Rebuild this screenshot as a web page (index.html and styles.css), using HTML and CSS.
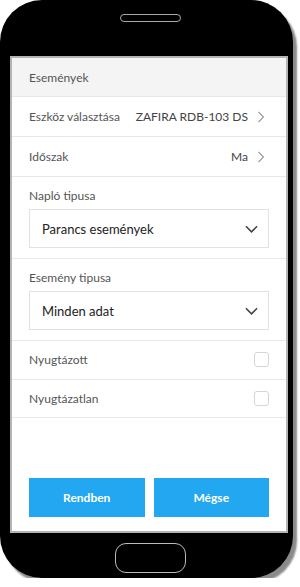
FILE: index.html
```html
<!DOCTYPE html>
<html lang="hu">
<head>
<meta charset="UTF-8" />
<meta name="viewport" content="width=device-width, initial-scale=1" />
<title>Események</title>
<link rel="stylesheet" href="styles.css">
</head>
<body>
  <div class="phone">
    <div class="phone-top"><span class="speaker"></span></div>

    <div class="screen">
      <div class="title-bar">Események</div>

      <div class="row link-row">
        <span class="row-label">Eszköz választása</span>
        <span class="row-value">ZAFIRA RDB-103 DS</span>
        <svg class="chev-right" viewBox="0 0 8 12" width="8" height="12"><path d="M1.5 1 L6.5 6 L1.5 11" fill="none" stroke="#999" stroke-width="1.1"/></svg>
      </div>
      <div class="row link-row">
        <span class="row-label">Időszak</span>
        <span class="row-value">Ma</span>
        <svg class="chev-right" viewBox="0 0 8 12" width="8" height="12"><path d="M1.5 1 L6.5 6 L1.5 11" fill="none" stroke="#999" stroke-width="1.1"/></svg>
      </div>

      <div class="field">
        <div class="field-label">Napló tipusa</div>
        <div class="select">
          <span>Parancs események</span>
          <svg viewBox="0 0 14 8" width="13" height="8"><path d="M1 1 L7 7 L13 1" fill="none" stroke="#444" stroke-width="1.7"/></svg>
        </div>
      </div>
      <div class="field">
        <div class="field-label">Esemény tipusa</div>
        <div class="select">
          <span>Minden adat</span>
          <svg viewBox="0 0 14 8" width="13" height="8"><path d="M1 1 L7 7 L13 1" fill="none" stroke="#444" stroke-width="1.7"/></svg>
        </div>
      </div>

      <div class="row check-row">
        <span class="row-label">Nyugtázott</span>
        <span class="checkbox"></span>
      </div>
      <div class="row check-row">
        <span class="row-label">Nyugtázatlan</span>
        <span class="checkbox"></span>
      </div>

      <div class="actions">
        <button class="btn">Rendben</button>
        <button class="btn">Mégse</button>
      </div>
    </div>

    <div class="phone-bottom"><span class="home"></span></div>
  </div>
</body>
</html>
```

FILE: styles.css
```css
* {
  box-sizing: border-box;
}
html, body {
  margin: 0;
  padding: 0;
  background: #fff;
  font-family: Lato, 'Open Sans', sans-serif;
}
.phone {
  width: 293px;
  height: 578px;
  background: #000;
  border-radius: 42px;
  box-shadow: 4px 5px 2px #8a8a8a;
  padding: 0 5px 0 10px;
  display: flex;
  flex-direction: column;
}
.phone-top {
  height: 56px;
  display: flex;
  justify-content: center;
  padding-top: 14px;
  padding-left: 2px;
}
.speaker {
  width: 61px;
  height: 8px;
  border: 1.5px solid #aaa;
  border-radius: 5px;
}
.screen {
  height: 477px;
  border: 2px solid #b4b4b4;
  background: #fff;
  display: flex;
  flex-direction: column;
}
.title-bar {
  height: 39px;
  background: #f4f4f4;
  border-bottom: 1px solid #e8e8e8;
  color: #555;
  font-size: 12px;
  display: flex;
  align-items: center;
  padding: 0 17px;
}
.row {
  height: 40px;
  border-bottom: 1px solid #e8e8e8;
  display: flex;
  align-items: center;
  padding: 0 17px;
  font-size: 12px;
  color: #555;
  flex-shrink: 0;
}
.row-label {
  flex: 1;
}
.row-value {
  color: #444;
  margin-right: 9px;
}
.chev-right {
  margin-right: 4px;
}
.field {
  border-bottom: 1px solid #e8e8e8;
  padding: 11px 17px 10px;
}
.field-label {
  font-size: 12px;
  color: #555;
  height: 21px;
}
.select {
  height: 39px;
  border: 1px solid #e2e2e2;
  display: flex;
  align-items: center;
  justify-content: space-between;
  padding: 0 10px 0 12px;
  font-size: 13px;
  color: #222;
}
.check-row {
  height: 38.5px;
}
.checkbox {
  width: 15px;
  height: 15px;
  border: 1px solid #d6d6d6;
  border-radius: 3px;
}
.actions {
  margin-top: auto;
  display: flex;
  gap: 9px;
  padding: 0 17px 14px;
}
.btn {
  flex: 1;
  height: 39px;
  border: none;
  background: #22a7f0;
  color: #fff;
  font-family: Lato, sans-serif;
  font-size: 12px;
  font-weight: 700;
}
.phone-bottom {
  flex: 1;
  display: flex;
  justify-content: center;
  padding-top: 10px;
  padding-left: 3px;
}
.home {
  width: 71px;
  height: 30px;
  border: 1.5px solid #bbb;
  border-radius: 11px;
}
```
